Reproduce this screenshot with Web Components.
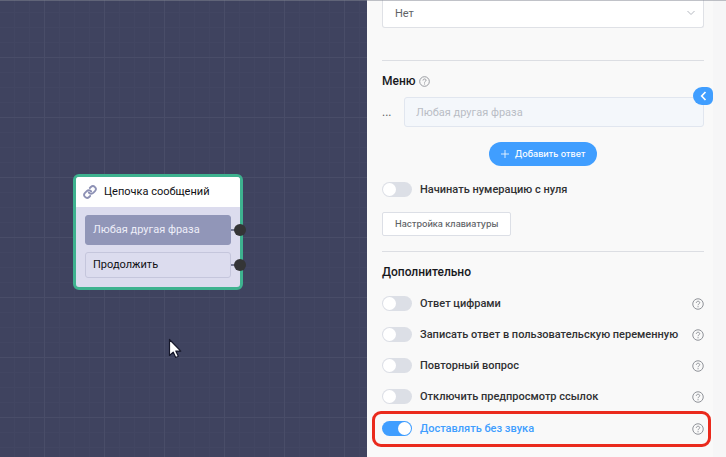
<!DOCTYPE html>
<html lang="ru">
<head>
<meta charset="utf-8">
<meta name="viewport" content="width=device-width, initial-scale=1">
<title>Цепочка сообщений</title>
<style>
  html, body { margin: 0; min-height: 100%; }
  body { font-family: Roboto, "Liberation Sans", sans-serif; font-size: 11px; color: #2b2d33; background: #3f435f; }
</style>
</head>
<body>
<bot-builder>
  <flow-canvas slot="canvas">
    <flow-node heading="Цепочка сообщений">
      <flow-port filled>Любая другая фраза</flow-port>
      <flow-port>Продолжить</flow-port>
    </flow-node>
  </flow-canvas>
  <settings-panel slot="panel">
    <select-box label="Значение" value="Нет"></select-box>
    <panel-section>
      <section-title slot="title" help>Меню</section-title>
      <answer-field text="Любая другая фраза"></answer-field>
      <add-button>Добавить ответ</add-button>
      <toggle-row>Начинать нумерацию с нуля</toggle-row>
      <plain-button>Настройка клавиатуры</plain-button>
    </panel-section>
    <panel-section compact>
      <section-title slot="title">Дополнительно</section-title>
      <toggle-row help>Ответ цифрами</toggle-row>
      <toggle-row help>Записать ответ в пользовательскую переменную</toggle-row>
      <toggle-row help>Повторный вопрос</toggle-row>
      <toggle-row help>Отключить предпросмотр ссылок</toggle-row>
      <toggle-row help checked highlighted>Доставлять без звука</toggle-row>
    </panel-section>
  </settings-panel>
</bot-builder>

<script>
  function define(name, markup, setup) {
    const template = document.createElement('template');
    template.innerHTML = markup;
    customElements.define(name, class extends HTMLElement {
      constructor() {
        super();
        this.attachShadow({ mode: 'open' }).append(template.content.cloneNode(true));
      }
      connectedCallback() {
        if (setup) setup(this, this.shadowRoot);
      }
    });
  }

  define('bot-builder', `
    <style>
      :host { display: grid; grid-template-columns: 367fr 359fr; min-height: 100vh; overflow: hidden; position: relative; }
      :host::before { content: ""; position: absolute; inset: 0 0 auto; height: 1px; background: rgba(130, 133, 145, .5); z-index: 2; }
      ::slotted(*) { min-width: 0; }
    </style>
    <slot name="canvas"></slot><slot name="panel"></slot>`);

  define('flow-canvas', `
    <style>
      :host {
        display: block; position: relative; overflow: hidden; background-color: #3f435f;
        background-image:
          linear-gradient(90deg, #494d68 1px, transparent 1px),
          linear-gradient(#494d68 1px, transparent 1px),
          linear-gradient(90deg, #424662 1px, transparent 1px),
          linear-gradient(#424662 1px, transparent 1px);
        background-size: 60px 60px, 60px 60px, 15px 15px, 15px 15px;
        background-position: 44px 0, 0 57px, 14px 0, 0 12px;
      }
      ::slotted(flow-node) { position: absolute; left: 73px; top: 174px; width: 170px; }
      .cursor { position: absolute; left: 168px; top: 338px; width: 14px; height: 21px; }
    </style>
    <slot></slot>
    <svg class="cursor" viewBox="0 0 14 21" aria-hidden="true">
      <path d="M1.500 1.500v16l3.700-3.400 2.500 5.400 2.600-1.200-2.500-5.200h5z" fill="#fff" stroke="#15172a" stroke-width="1.2" stroke-linejoin="round"/>
    </svg>`);

  define('flow-node', `
    <style>
      :host { display: block; box-sizing: border-box; border: 3px solid #3eb28f; border-radius: 6px; background: #dcdcee; }
      header { display: flex; align-items: center; gap: 7px; height: 30px; padding: 0 7px; background: #fff; border-radius: 3px 3px 0 0; }
      h2 { margin: 0; font-size: 11px; line-height: 16px; font-weight: 400; color: #101014; white-space: nowrap; }
      svg { width: 14px; height: 14px; flex: none; }
      .ports { display: grid; gap: 7px; padding: 8px 9px 9px; }
    </style>
    <header>
      <svg viewBox="0 0 24 24" fill="none" stroke="#8d91b5" stroke-width="3.2" stroke-linecap="round" aria-hidden="true">
        <path d="M10 13a5 5 0 0 0 7.540.540l3-3a5 5 0 0 0-7.070-7.070l-1.720 1.710"/>
        <path d="M14 11a5 5 0 0 0-7.540-.540l-3 3a5 5 0 0 0 7.070 7.070l1.710-1.710"/>
      </svg>
      <h2></h2>
    </header>
    <div class="ports"><slot></slot></div>`,
    (host, root) => { root.querySelector('h2').textContent = host.getAttribute('heading'); });

  define('flow-port', `
    <style>
      :host { display: block; position: relative; }
      button { display: block; box-sizing: border-box; width: 100%; height: 26px; padding: 0 7px; border: 1px solid #c5c6dc; border-radius: 3px; background: transparent; font: 400 11px/16px Roboto, sans-serif; color: #101014; text-align: left; white-space: nowrap; }
      :host([filled]) button { height: 30px; background: #9196b8; border-color: #9196b8; color: #eeeef8; }
      .line { position: absolute; left: 100%; top: 50%; width: 5px; height: 2px; margin-top: -1px; background: #777b95; }
      .dot { position: absolute; right: -15px; top: 50%; width: 12px; height: 12px; margin-top: -6px; border-radius: 50%; background: #343536; }
    </style>
    <button type="button"><slot></slot></button><span class="line"></span><span class="dot"></span>`);

  define('settings-panel', `
    <style>
      :host { display: flex; position: relative; background: #f6f6f7; }
      .body { flex: 1; min-width: 0; padding: 0 9px 0 15px; background: #f9f9f9; }
      .gutter { width: 13px; flex: none; }
      .collapse { position: absolute; right: 13px; top: 87px; width: 20px; height: 18px; padding: 0; border: 0; border-radius: 9px 6px 6px 9px; background: #409eff; display: grid; place-items: center; }
      svg { width: 7px; height: 10px; }
    </style>
    <div class="body"><slot></slot></div>
    <div class="gutter"></div>
    <button class="collapse" type="button" aria-label="Свернуть панель">
      <svg viewBox="0 0 7 10" fill="none" stroke="#fff" stroke-width="1.7" aria-hidden="true"><path d="M5.500 1 1.700 5l3.800 4"/></svg>
    </button>`);

  define('select-box', `
    <style>
      :host { display: block; position: relative; }
      select { appearance: none; display: block; box-sizing: border-box; width: 100%; height: 28px; padding: 0 30px 0 12px; border: 1px solid #dfe1e6; border-top: 0; border-radius: 0 0 3px 3px; background: #fff; color: #606266; font: 400 11px/16px Roboto, sans-serif; }
      svg { position: absolute; right: 9px; top: 10px; width: 8px; height: 6px; pointer-events: none; }
    </style>
    <select><option></option></select>
    <svg viewBox="0 0 8 6" fill="none" stroke="#b4b8c0" aria-hidden="true"><path d="m.5 1 3.500 3.500L7.500 1"/></svg>`,
    (host, root) => {
      root.querySelector('select').setAttribute('aria-label', host.getAttribute('label'));
      root.querySelector('option').textContent = host.getAttribute('value');
    });

  define('panel-section', `
    <style>
      :host { display: block; margin-top: 32px; border-top: 1px solid #dcdee3; padding-top: 11px; }
      :host([compact]) { margin-top: 15px; }
      .items { padding-top: 7px; }
    </style>
    <slot name="title"></slot>
    <div class="items"><slot></slot></div>`);

  define('help-icon', `
    <style>
      :host { display: block; width: 12px; height: 12px; flex: none; }
      button { display: block; width: 100%; height: 100%; padding: 0; border: 0; background: none; }
      svg { display: block; width: 100%; height: 100%; }
    </style>
    <button type="button" aria-label="Справка">
      <svg viewBox="0 0 24 24" fill="none" stroke="#909399" stroke-width="2" aria-hidden="true">
        <circle cx="12" cy="12" r="10.500"/>
        <path d="M8.700 9.800c0-2 1.400-3.300 3.400-3.300s3.300 1.200 3.300 2.900c0 2.400-3.300 2.300-3.300 5"/>
        <path d="M12.100 16.300v2.300"/>
      </svg>
    </button>`);

  define('section-title', `
    <style>
      :host { display: flex; align-items: center; gap: 3px; height: 18px; }
      h3 { margin: 0; font-size: 12px; line-height: 18px; font-weight: 500; color: #17181c; }
      help-icon { display: none; width: 11px; height: 11px; }
      :host([help]) help-icon { display: block; }
    </style>
    <h3><slot></slot></h3><help-icon></help-icon>`);

  define('answer-field', `
    <style>
      :host { display: flex; align-items: center; gap: 11px; height: 30px; }
      label { width: 11px; font-size: 12px; color: #606266; }
      input { flex: 1; min-width: 0; box-sizing: border-box; height: 30px; padding: 0 11px; border: 1px solid #e1e6ef; border-radius: 3px; background: #f4f7fb; color: #b9bdc5; font: 400 11px/16px Roboto, sans-serif; }
    </style>
    <label for="answer">...</label><input id="answer" type="text" disabled>`,
    (host, root) => { root.querySelector('input').value = host.getAttribute('text'); });

  define('add-button', `
    <style>
      :host { display: flex; justify-content: center; padding: 15px 0 8px; }
      button { display: flex; align-items: center; gap: 6px; height: 24px; padding: 0 12px; border: 0; border-radius: 12px; background: #409eff; color: #fff; font: 500 9px/16px Inter, sans-serif; white-space: nowrap; }
      svg { width: 8px; height: 8px; }
    </style>
    <button type="button"><svg viewBox="0 0 8 8" stroke="#fff" stroke-width=".8" aria-hidden="true"><path d="M4 0v8M0 4h8"/></svg><slot></slot></button>`);

  define('plain-button', `
    <style>
      :host { display: block; padding-top: 7px; }
      button { height: 24px; padding: 0 12px; display: block; border: 1px solid #dcdfe6; border-radius: 2px; background: #fff; color: #606266; font: 500 9px/16px Inter, sans-serif; white-space: nowrap; }
    </style>
    <button type="button"><slot></slot></button>`);

  define('toggle-row', `
    <style>
      :host { display: flex; align-items: center; justify-content: space-between; height: 31px; position: relative; }
      :host([highlighted]) { margin-top: 1px; }
      label { display: flex; align-items: center; gap: 8px; font-size: 11px; line-height: 16px; font-weight: 500; color: #303133; white-space: nowrap; }
      input { appearance: none; display: grid; align-items: center; width: 30px; height: 15px; margin: 0; padding: 0 1px; box-sizing: border-box; border-radius: 8px; background: #dcdfe6; flex: none; }
      input::before { content: ""; width: 13px; height: 13px; border-radius: 50%; background: #fff; }
      input:checked { background: #409eff; justify-items: end; }
      :host([checked]) label { color: #409eff; }
      help-icon { display: none; }
      :host([help]) help-icon { display: block; }
      .ring { display: none; position: absolute; inset: -2px -7px -3px -10px; border: 3px solid #ea2a1d; border-radius: 9px; pointer-events: none; }
      :host([highlighted]) .ring { display: block; }
    </style>
    <label><input type="checkbox" role="switch"><span><slot></slot></span></label><help-icon></help-icon><div class="ring"></div>`,
    (host, root) => { root.querySelector('input').checked = host.hasAttribute('checked'); });
</script>
</body>
</html>
